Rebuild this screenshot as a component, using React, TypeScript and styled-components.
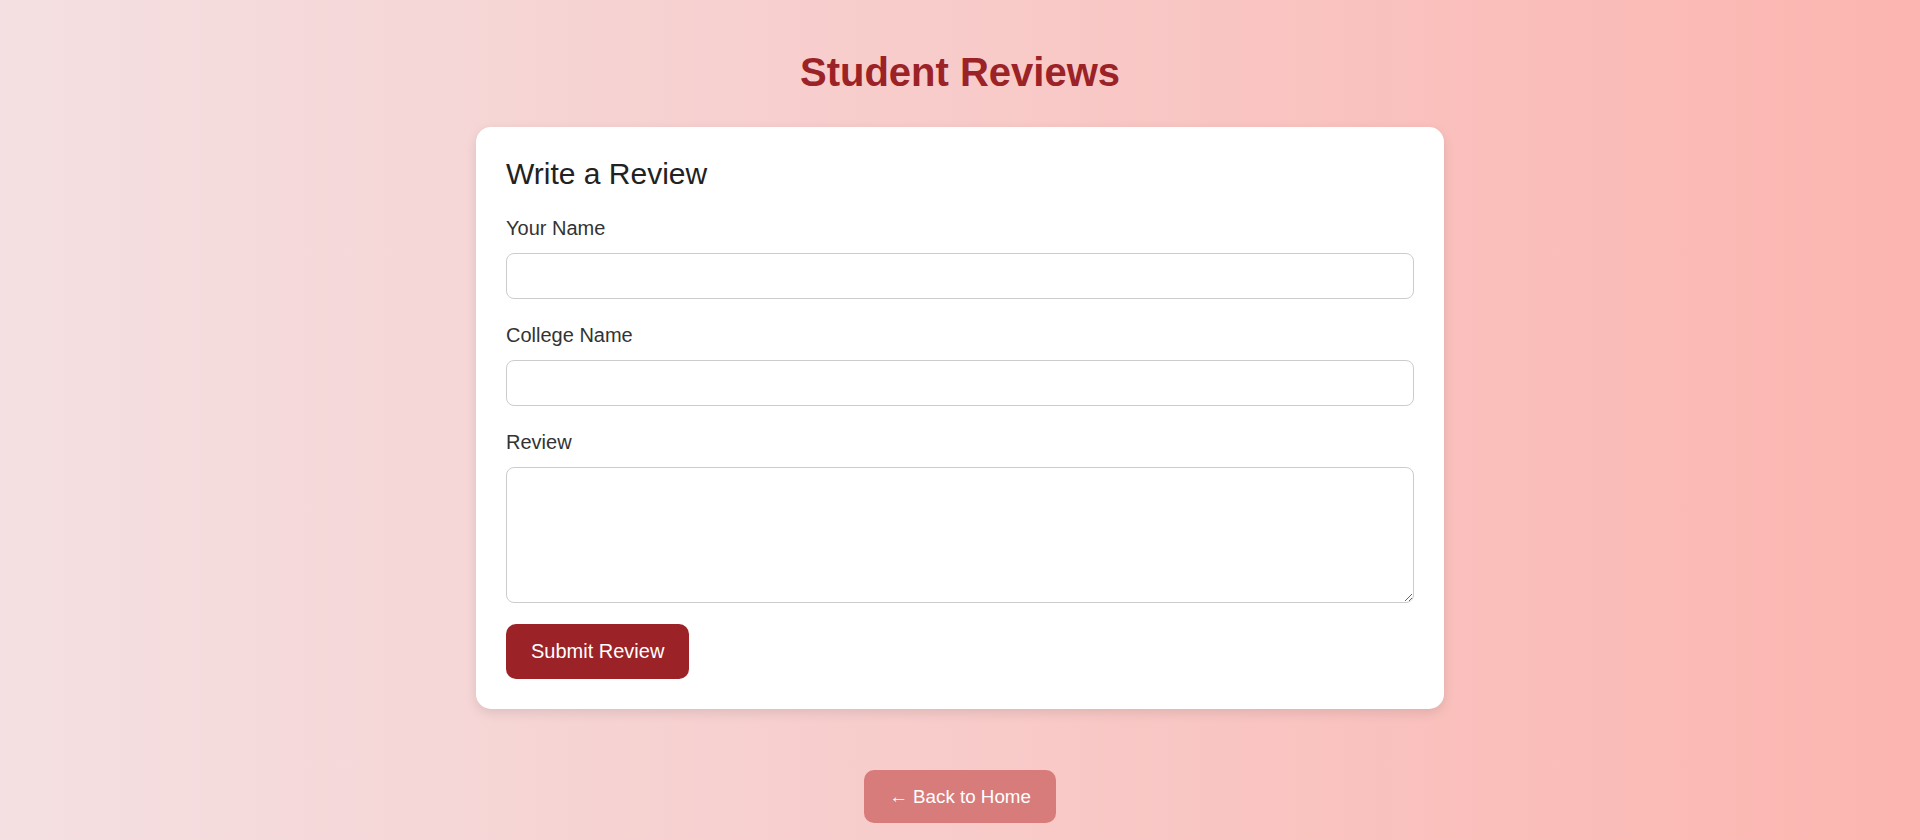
import React from "react";
import styled, { createGlobalStyle } from "styled-components";

const GlobalStyle = createGlobalStyle`
  html, body {
    margin: 0;
    padding: 0;
  }
  body {
    font-family: "Liberation Sans", Arial, sans-serif;
  }
  * {
    box-sizing: border-box;
  }
`;

const Page = styled.div`
  min-height: 100vh;
  background: linear-gradient(to right, #f4e0e2 0%, #f8c9c7 55%, #fcb5b0 100%);
  padding-top: 49px;
  display: flex;
  flex-direction: column;
  align-items: center;
`;

const Title = styled.h1`
  margin: 0 0 32px;
  font-size: 40px;
  line-height: 46px;
  font-weight: 700;
  color: #9b2226;
  text-align: center;
`;

const Card = styled.section`
  width: 968px;
  padding: 30px;
  background: #ffffff;
  border-radius: 15px;
  box-shadow: 0 4px 12px rgba(0, 0, 0, 0.1);
`;

const CardTitle = styled.h2`
  margin: 0 0 25px;
  font-size: 30px;
  line-height: 34.5px;
  font-weight: 400;
  color: #222222;
`;

const Form = styled.form`
  display: flex;
  flex-direction: column;
  align-items: flex-start;
`;

const Label = styled.label`
  display: block;
  font-size: 20px;
  line-height: 23px;
  color: #333333;
  margin-bottom: 13px;
`;

const TextInput = styled.input`
  display: block;
  width: 100%;
  height: 46px;
  border: 1px solid #cccccc;
  border-radius: 8px;
  padding: 0 12px;
  font-family: inherit;
  font-size: 20px;
  margin: 0 0 25px;
  background: #fff;
`;

const TextArea = styled.textarea`
  display: block;
  width: 100%;
  height: 136px;
  border: 1px solid #cccccc;
  border-radius: 8px;
  padding: 12px;
  font-family: inherit;
  font-size: 20px;
  margin: 0 0 21px;
  background: #fff;
`;

const SubmitButton = styled.button`
  height: 55px;
  padding: 0 25px;
  border: none;
  border-radius: 10px;
  background: #9b2226;
  color: #ffffff;
  font-family: inherit;
  font-size: 20px;
  line-height: 23px;
  cursor: pointer;
`;

const BackLink = styled.a`
  display: inline-block;
  margin-top: 61px;
  padding: 16px 25px;
  border-radius: 10px;
  background: #d87b7b;
  color: #ffffff;
  font-size: 18.75px;
  line-height: 21px;
  text-decoration: none;
`;

export default function App() {
  return (
    <>
      <GlobalStyle />
      <Page>
        <Title>Student Reviews</Title>
        <Card>
          <CardTitle>Write a Review</CardTitle>
          <Form onSubmit={(e) => e.preventDefault()}>
            <Label htmlFor="name">Your Name</Label>
            <TextInput id="name" type="text" />
            <Label htmlFor="college">College Name</Label>
            <TextInput id="college" type="text" />
            <Label htmlFor="review">Review</Label>
            <TextArea id="review" />
            <SubmitButton type="submit">Submit Review</SubmitButton>
          </Form>
        </Card>
        <BackLink href="#">← Back to Home</BackLink>
      </Page>
    </>
  );
}
